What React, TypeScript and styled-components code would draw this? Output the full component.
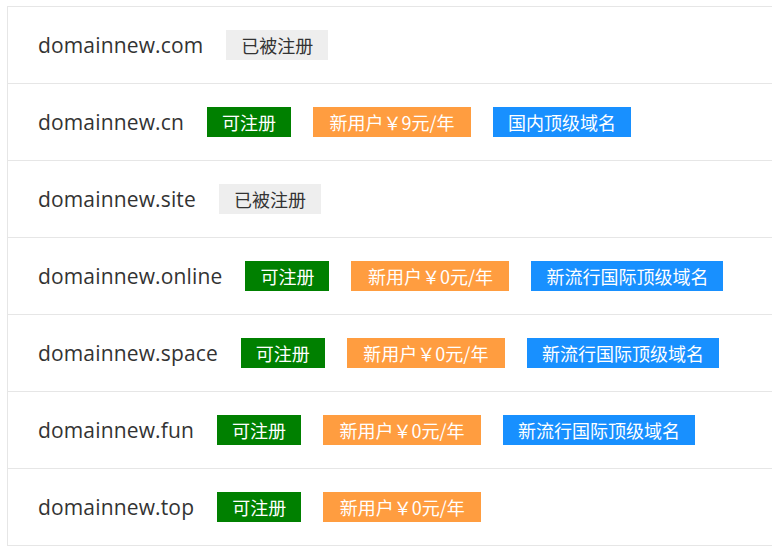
import React from 'react';
import styled, { createGlobalStyle } from 'styled-components';

/**
 * Domain lookup results: one row per suffix, with status and promo tags.
 */
const GlobalStyle = createGlobalStyle`
	body {
		margin: 0;
		background: #fff;
		font-family: 'Open Sans', 'Noto Sans CJK SC', sans-serif;
	}
`;

const Page = styled.div`
	padding: 6px 0 0 7px;
	overflow: hidden;
`;

const List = styled.ul`
	list-style: none;
	margin: 0;
	padding: 0;
	width: 900px;
	border-top: 1px solid #e6e6e6;
	border-left: 1px solid #e6e6e6;
`;

const Row = styled.li`
	display: flex;
	align-items: center;
	height: 76px;
	padding-left: 30px;
	border-bottom: 1px solid #e6e6e6;
`;

const Domain = styled.span`
	font-family: 'Open Sans', 'Noto Sans CJK SC', sans-serif;
	font-size: 21px;
	letter-spacing: 0.15px;
	color: #333;
	margin-right: 1px;
`;

const tagColors = {
	taken: { bg: '#eeeeee', fg: '#333333', pad: 15 },
	free: { bg: '#008000', fg: '#ffffff', pad: 15 },
	promo: { bg: '#ff9d40', fg: '#ffffff', pad: 16.5 },
	info: { bg: '#1890ff', fg: '#ffffff', pad: 15 },
};

type TagKind = keyof typeof tagColors;

const Tag = styled.span<{ $kind: TagKind }>`
	display: inline-flex;
	align-items: center;
	height: 30px;
	padding: 0 ${(p) => tagColors[p.$kind].pad}px;
	margin-left: 22px;
	font-family: 'Noto Sans CJK SC', sans-serif;
	font-size: 18px;
	line-height: 30px;
	background: ${(p) => tagColors[p.$kind].bg};
	color: ${(p) => tagColors[p.$kind].fg};
`;

interface Result {
	name: string;
	tags: { kind: TagKind; text: string }[];
}

const results: Result[] = [
	{ name: 'domainnew.com', tags: [{ kind: 'taken', text: '已被注册' }] },
	{
		name: 'domainnew.cn',
		tags: [
			{ kind: 'free', text: '可注册' },
			{ kind: 'promo', text: '新用户￥9元/年' },
			{ kind: 'info', text: '国内顶级域名' },
		],
	},
	{ name: 'domainnew.site', tags: [{ kind: 'taken', text: '已被注册' }] },
	{
		name: 'domainnew.online',
		tags: [
			{ kind: 'free', text: '可注册' },
			{ kind: 'promo', text: '新用户￥0元/年' },
			{ kind: 'info', text: '新流行国际顶级域名' },
		],
	},
	{
		name: 'domainnew.space',
		tags: [
			{ kind: 'free', text: '可注册' },
			{ kind: 'promo', text: '新用户￥0元/年' },
			{ kind: 'info', text: '新流行国际顶级域名' },
		],
	},
	{
		name: 'domainnew.fun',
		tags: [
			{ kind: 'free', text: '可注册' },
			{ kind: 'promo', text: '新用户￥0元/年' },
			{ kind: 'info', text: '新流行国际顶级域名' },
		],
	},
	{
		name: 'domainnew.top',
		tags: [
			{ kind: 'free', text: '可注册' },
			{ kind: 'promo', text: '新用户￥0元/年' },
		],
	},
];

function App(): JSX.Element {
	return (
		<>
			<GlobalStyle />
			<Page>
				<List>
					{results.map((r) => (
						<Row key={r.name}>
							<Domain>{r.name}</Domain>
							{r.tags.map((t) => (
								<Tag key={t.text} $kind={t.kind}>
									{t.text}
								</Tag>
							))}
						</Row>
					))}
				</List>
			</Page>
		</>
	);
}

export default App;
